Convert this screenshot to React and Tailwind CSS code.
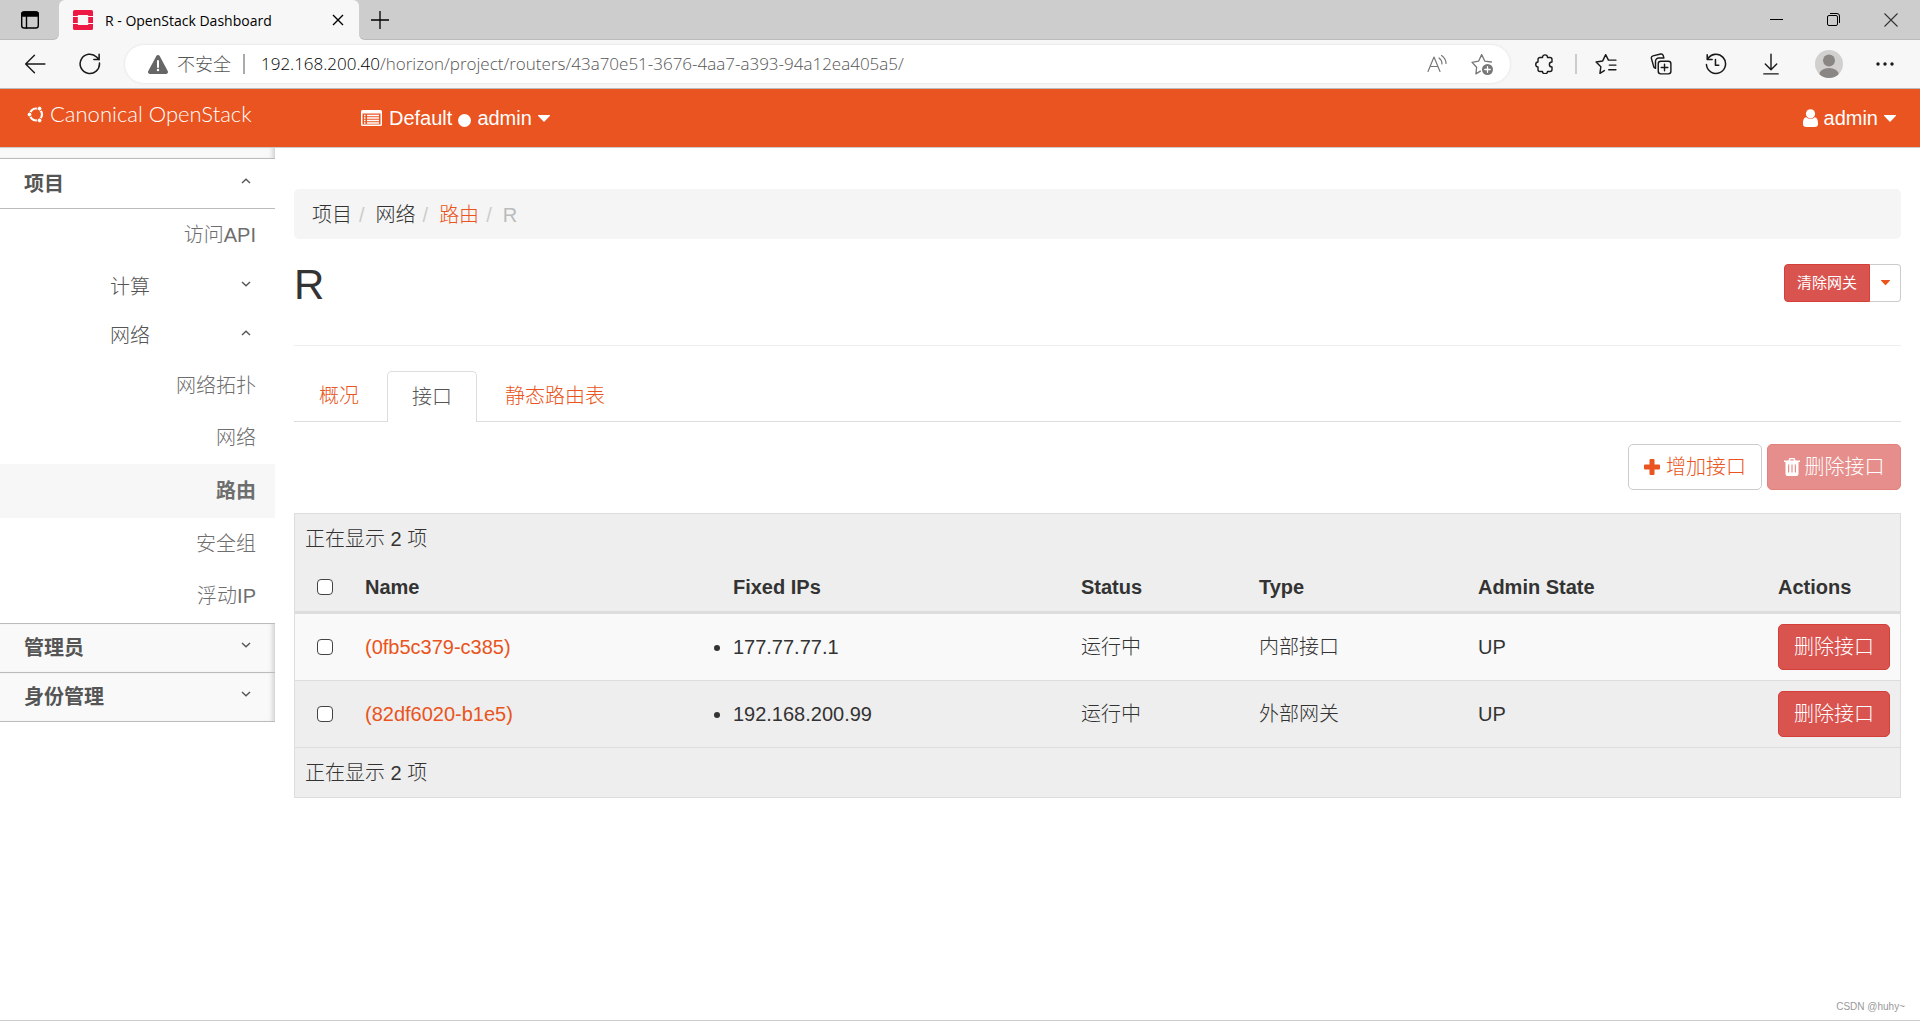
const routes = [
  { id: "(0fb5c379-c385)", ip: "177.77.77.1", status: "运行中", type: "内部接口", state: "UP" },
  { id: "(82df6020-b1e5)", ip: "192.168.200.99", status: "运行中", type: "外部网关", state: "UP" },
];

const networkItems = ["网络拓扑", "网络", "路由", "安全组", "浮动IP"];

function Icon({ size = 20, width = 1.3, className = "", children }) {
  return (
    <svg
      width={size}
      height={size}
      viewBox="0 0 20 20"
      fill="none"
      stroke="currentColor"
      strokeWidth={width}
      strokeLinecap="round"
      strokeLinejoin="round"
      className={`shrink-0 ${className}`}
      aria-hidden="true"
    >
      {children}
    </svg>
  );
}

function Chevron({ up }) {
  return (
    <svg width="10" height="6" viewBox="0 0 10 6" fill="none" stroke="#555" strokeWidth="1.4" aria-hidden="true">
      <path d={up ? "M1 5 5 1.2 9 5" : "M1 1 5 4.8 9 1"} />
    </svg>
  );
}

function Caret({ className }) {
  return (
    <svg viewBox="0 0 12 7" fill="currentColor" className={className} aria-hidden="true">
      <path d="M.6 0h10.800a.5.5 0 0 1 .4.900L6.500 6.600a.7.7 0 0 1-1 0L.2.900A.5.5 0 0 1 .6 0z" />
    </svg>
  );
}

/* Browser window */

function TabStrip() {
  return (
    <div className="flex h-10 bg-[#f7f7f7] text-black">
      <div className="w-[59px] flex items-center pl-5 bg-[#cdcdcd] border-b border-[#bbb] rounded-br-md">
        <button aria-label="标签页">
          <Icon width={1.4}>
            <rect x="1.7" y="2" width="16.6" height="16" rx="2.6" />
            <path d="M1.7 6V4.6A2.6 2.6 0 0 1 4.3 2h11.4a2.6 2.6 0 0 1 2.6 2.6V6z" fill="currentColor" />
            <path d="M6.5 6v12" />
          </Icon>
        </button>
      </div>
      <div className="w-[300px] bg-[#cdcdcd]">
        <div className="h-full flex items-center bg-[#f7f7f7] rounded-t-md pl-[14px] pr-[15px]">
          <svg width="20" height="20" viewBox="0 0 20 20" aria-hidden="true">
            <path
              fill="#ed1944"
              d="M1.6 0h16.8A1.6 1.6 0 0 1 20 1.6V6h-4.8V5H4.8v1H0V1.6A1.6 1.6 0 0 1 1.6 0zM0 7h4.8v6H0zM15.2 7H20v6h-4.8zM0 14h4.8v1h10.4v-1H20v4.4a1.6 1.6 0 0 1-1.6 1.6H1.6A1.6 1.6 0 0 1 0 18.4z"
            />
          </svg>
          <span className="ml-3 text-[14px] whitespace-nowrap">R - OpenStack Dashboard</span>
          <button className="ml-auto" aria-label="关闭标签页">
            <svg width="12" height="12" viewBox="0 0 12 12" stroke="currentColor" strokeWidth="1.4" aria-hidden="true">
              <path d="M1 1l10 10M11 1 1 11" />
            </svg>
          </button>
        </div>
      </div>
      <div className="flex-1 flex items-center bg-[#cdcdcd] border-b border-[#bbb] rounded-bl-md pl-3 pr-[22px]">
        <button aria-label="新建标签页">
          <svg width="18" height="18" viewBox="0 0 18 18" stroke="currentColor" strokeWidth="1.3" aria-hidden="true">
            <path d="M9 0v18M0 9h18" />
          </svg>
        </button>
        <div className="ml-auto flex items-center gap-11">
          <button aria-label="最小化">
            <svg width="13" height="13" viewBox="0 0 13 13" stroke="currentColor" aria-hidden="true">
              <path d="M0 6.5h13" />
            </svg>
          </button>
          <button aria-label="还原">
            <svg width="13" height="13" viewBox="0 0 13 13" fill="none" stroke="currentColor" aria-hidden="true">
              <rect x="0.5" y="2.5" width="10" height="10" rx="1.5" />
              <path d="M3 .5h7A2.5 2.5 0 0 1 12.5 3v7" />
            </svg>
          </button>
          <button aria-label="关闭">
            <svg width="14" height="14" viewBox="0 0 14 14" stroke="#333" strokeWidth="1.1" aria-hidden="true">
              <path d="M.5.5l13 13M13.5.5.5 13.5" />
            </svg>
          </button>
        </div>
      </div>
    </div>
  );
}

function Toolbar() {
  return (
    <div className="flex items-center h-[49px] bg-[#f7f7f7] border-b border-[#bbb] pl-6 pr-[26px] text-[#1a1a1a]">
      <button aria-label="返回">
        <Icon width={1.3} size={22}>
          <path d="M19 10H1.5M9.5 2 1.5 10l8 8" />
        </Icon>
      </button>
      <button className="ml-[33px]" aria-label="刷新">
        <Icon size={22} width={1.4}>
          <path d="M18.6 9.2A8.8 8.8 0 1 1 16 3.6L18.3 6M18.3 1.2V6h-4.8" />
        </Icon>
      </button>
      <div className="ml-6 flex-1 flex items-center h-[38px] bg-white rounded-full shadow-[0_0_3px_#ddd] pl-[22px] pr-[17px]">
        <svg width="22" height="19" viewBox="0 0 22 19" aria-hidden="true">
          <path d="M9.300 1a2 2 0 0 1 3.400 0l8 15a2 2 0 0 1-1.700 3H3a2 2 0 0 1-1.700-3z" fill="#666" />
          <path d="M11 6v6" stroke="#fff" strokeWidth="2" strokeLinecap="round" />
          <circle cx="11" cy="15" r="1.2" fill="#fff" />
        </svg>
        <span className="ml-2 text-[18px] font-light text-[#555]">不安全</span>
        <span className="ml-3 w-0.5 h-5 bg-[#aaa]" />
        <span className="ml-4 text-[17px] font-light text-[#555] whitespace-nowrap">
          <span className="text-black">192.168.200.40</span>
          /horizon/project/routers/43a70e51-3676-4aa7-a393-94a12ea405a5/
        </span>
        <div className="ml-auto flex items-center gap-6 text-[#777]">
          <button aria-label="朗读">
            <Icon size={20} width={1.2}>
              <path d="M1 17.5 7 3l6 14.500M3 12.500h8M12 4q3 2 3 6M14.500 1.500q4.500 3 4.500 8" />
            </Icon>
          </button>
          <button aria-label="收藏">
            <Icon size={22} width={1.2}>
              <path d="M8.500 16.500 4.500 19l.6-6L1 8.500l6-1.200L9.700 1.500l2.800 5.800 6 .9" />
              <circle cx="15" cy="15" r="5" fill="currentColor" stroke="none" />
              <path d="M15 12.500v5M12.500 15h5" stroke="#fff" />
            </Icon>
          </button>
        </div>
      </div>
      <div className="ml-[25px] flex items-center">
        <button aria-label="扩展">
          <Icon size={20} width={1.4}>
            <path d="M5 3.500h2.500c0-3.500 5-3.500 5 0H15a2 2 0 0 1 2 2V8c-3.500 0-3.500 5 0 5v2.500a2 2 0 0 1-2 2h-2.500c0 3-5 3-5 0H5a2 2 0 0 1-2-2V13c-3 0-3-5 0-5V5.500a2 2 0 0 1 2-2z" />
          </Icon>
        </button>
        <span className="ml-5 w-0.5 h-5 bg-[#ccc]" />
        <button className="ml-[18px]" aria-label="收藏夹">
          <Icon size={22} width={1.3}>
            <path d="M8.500 16 4.500 18.500l.8-6L1 8.200l6-1L9.700 1.500l2.500 5H19M13 11h6M12.500 15.200H19" />
          </Icon>
        </button>
        <button className="ml-[33px]" aria-label="集锦">
          <Icon size={22} width={1.3}>
            <rect x="7.500" y="7.500" width="11.500" height="11.500" rx="2.300" />
            <path d="M13.200 10.200v6M10.200 13.200h6M5 14 3.500 12.800 1.300 5A2 2 0 0 1 2.700 2.600l7-1.700A2 2 0 0 1 12 2.200l.6 2.300H8A3 3 0 0 0 5 7.500z" />
          </Icon>
        </button>
        <button className="ml-[33px]" aria-label="历史记录">
          <Icon size={22} width={1.4}>
            <path d="M2 1.500V6h4.500M2.300 5.800A8.700 8.700 0 1 1 1.300 10.500M9.500 6v5.200h3" />
          </Icon>
        </button>
        <button className="ml-[33px]" aria-label="下载">
          <Icon size={22} width={1.3}>
            <path d="M10 1v14M4.800 10 10 15.200l5.200-5.200M3.500 19h13" />
          </Icon>
        </button>
        <button className="ml-[33px]" aria-label="个人资料">
          <svg width="28" height="28" viewBox="0 0 28 28" aria-hidden="true">
            <clipPath id="avatar">
              <circle cx="14" cy="14" r="14" />
            </clipPath>
            <g clipPath="url(#avatar)">
              <rect width="28" height="28" fill="#d2d0ce" />
              <circle cx="14" cy="10.500" r="6" fill="#8a8684" />
              <ellipse cx="14" cy="25" rx="10" ry="7" fill="#8a8684" />
            </g>
          </svg>
        </button>
        <button className="ml-[33px]" aria-label="更多">
          <svg width="18" height="4" viewBox="0 0 18 4" fill="currentColor" aria-hidden="true">
            <circle cx="2" cy="2" r="1.7" />
            <circle cx="9" cy="2" r="1.7" />
            <circle cx="16" cy="2" r="1.7" />
          </svg>
        </button>
      </div>
    </div>
  );
}

/* Dashboard */

function Navbar() {
  return (
    <header className="flex items-center h-[59px] bg-[#e95420] border-b border-[#ccc] text-white pl-[27px] pr-6">
      <a href="#" className="flex items-center w-[334px] pb-2">
        <svg width="17" height="17" viewBox="0 0 17 17" aria-hidden="true">
          <circle cx="9" cy="8.500" r="6" fill="none" stroke="#fff" strokeWidth="2.2" />
          <g fill="#fff" stroke="#e95420" strokeWidth="0.9">
            <circle cx="2.500" cy="8.500" r="2.300" />
            <circle cx="12.600" cy="2.600" r="2.300" />
            <circle cx="12.600" cy="14.400" r="2.300" />
          </g>
        </svg>
        <span className="ml-[6px] font-['Lato'] font-light text-[22px] leading-7">Canonical OpenStack</span>
      </a>
      <button className="flex items-center">
        <svg width="21" height="16" viewBox="0 0 21 16" aria-hidden="true">
          <path
            fill="#fff"
            fillRule="evenodd"
            d="M1.500 0h18A1.500 1.500 0 0 1 21 1.500v13a1.500 1.500 0 0 1-1.500 1.500h-18A1.500 1.500 0 0 1 0 14.500v-13A1.500 1.500 0 0 1 1.500 0zM1.500 3.500v11h18v-11z"
          />
          <path d="M3 5.500h1.500M6 5.500h12M3 8h1.500M6 8h12M3 10.500h1.500M6 10.500h12M3 13h1.500M6 13h12" stroke="#fff" strokeWidth="1.3" />
        </svg>
        <span className="ml-[7px]">Default</span>
        <span className="mx-[6px] mt-1 size-[13px] rounded-full bg-white" />
        <span>admin</span>
        <Caret className="ml-[6px] w-3" />
      </button>
      <button className="ml-auto flex items-center">
        <svg width="15" height="18" viewBox="0 0 15 18" fill="#fff" aria-hidden="true">
          <circle cx="7.500" cy="4.800" r="4.600" />
          <path d="M3.300 8.200a6 6 0 0 0 8.400 0C14.200 8.500 15 11 15 14.500a3.300 3.300 0 0 1-3.300 3.500H3.300A3.300 3.300 0 0 1 0 14.500C0 11 .8 8.500 3.300 8.200z" />
        </svg>
        <span className="ml-[6px]">admin</span>
        <Caret className="ml-[6px] w-3" />
      </button>
    </header>
  );
}

function PanelHeader({ label, open }) {
  return (
    <button
      className={`w-full flex items-center justify-between px-6 font-bold text-[#555] border-b border-[#bbb] ${
        open ? "h-[50px] bg-white" : "h-[49px] bg-[#f9f9f9] shadow-[inset_-5px_0_5px_-3px_#ccc]"
      }`}
    >
      {label}
      <span className="pb-[6px]">
        <Chevron up={open} />
      </span>
    </button>
  );
}

function SubHeader({ label, open }) {
  return (
    <button className="w-full h-[49px] flex items-center justify-between pl-[110px] pr-6 font-light text-[#555]">
      {label}
      <span className="pb-[6px]">
        <Chevron up={open} />
      </span>
    </button>
  );
}

function SideLink({ label, active }) {
  return (
    <a
      href="#"
      className={`flex items-center justify-end pr-[19px] text-[#6e6e6e] ${
        active ? "h-[54px] bg-[#f7f7f7] font-bold" : "h-[52px] font-light"
      }`}
    >
      {label}
    </a>
  );
}

function Sidebar() {
  return (
    <nav className="w-[275px] shrink-0">
      <div className="h-[11px] bg-[#f9f9f9] border-b border-[#bbb] shadow-[inset_-5px_0_5px_-3px_#ccc]" />
      <PanelHeader label="项目" open />
      <SideLink label="访问API" />
      <div className="pt-px">
        <SubHeader label="计算" />
        <SubHeader label="网络" open />
      </div>
      {networkItems.map((item) => (
        <SideLink key={item} label={item} active={item === "路由"} />
      ))}
      <div className="mt-px border-t border-[#bbb]">
        <PanelHeader label="管理员" />
        <PanelHeader label="身份管理" />
      </div>
    </nav>
  );
}

function Check({ label }) {
  return (
    <input
      type="checkbox"
      aria-label={label}
      className="block mx-auto size-4 appearance-none rounded-[4px] border border-[#444] bg-white"
    />
  );
}

function InterfaceTable() {
  return (
    <table className="mt-[23px] w-full table-fixed border border-[#ddd] border-separate border-spacing-0 bg-[#eee] text-left">
      <colgroup>
        <col className="w-[60px]" />
        <col />
        <col className="w-[348px]" />
        <col className="w-[178px]" />
        <col className="w-[219px]" />
        <col className="w-[300px]" />
        <col className="w-[132px]" />
      </colgroup>
      <thead>
        <tr>
          <td colSpan={7} className="h-[49px] px-[10px] font-light">正在显示 2 项</td>
        </tr>
        <tr className="[&>th]:h-[51px] [&>th]:px-[10px] [&>th]:border-b-3 [&>th]:border-[#ddd]">
          <th><Check label="全选" /></th>
          <th>Name</th>
          <th>Fixed IPs</th>
          <th>Status</th>
          <th>Type</th>
          <th>Admin State</th>
          <th>Actions</th>
        </tr>
      </thead>
      <tbody className="font-light">
        {routes.map((r) => (
          <tr
            key={r.id}
            className="odd:bg-[#f9f9f9] [&>td]:h-[67px] [&>td]:px-[10px] [&>td]:border-b [&>td]:border-[#ddd]"
          >
            <td><Check label={r.id} /></td>
            <td><a href="#" className="text-[#e95420]">{r.id}</a></td>
            <td>
              <ul className="list-disc">
                <li>{r.ip}</li>
              </ul>
            </td>
            <td>{r.status}</td>
            <td>{r.type}</td>
            <td>{r.state}</td>
            <td>
              <button className="block h-[46px] w-full rounded-[5px] border border-[#d43f3a] bg-[#d9534f] text-white">
                删除接口
              </button>
            </td>
          </tr>
        ))}
      </tbody>
      <tfoot>
        <tr>
          <td colSpan={7} className="h-[49px] px-[10px] font-light">正在显示 2 项</td>
        </tr>
      </tfoot>
    </table>
  );
}

function RouterPage() {
  return (
    <main className="flex-1 px-[19px] pt-[41px]">
      <ol className="flex items-center h-[50px] px-[18px] pt-0.5 rounded-[5px] bg-[#f5f5f5] font-light">
        <li>项目</li>
        <li className="px-[7px] text-[#ccc]">/</li>
        <li className="ml-1">网络</li>
        <li className="px-[7px] text-[#ccc]">/</li>
        <li className="ml-1"><a href="#" className="text-[#e95420]">路由</a></li>
        <li className="px-[7px] text-[#ccc]">/</li>
        <li className="ml-1 text-[#bbb]">R</li>
      </ol>

      <div className="flex items-start justify-between h-[107px] pt-[25px] border-b border-[#eee]">
        <h1 className="text-[42px] leading-[42px]">R</h1>
        <div className="flex h-[38px]">
          <button className="w-[86px] rounded-l-[4px] border border-[#d43f3a] bg-[#d9534f] text-[15px] text-white">
            清除网关
          </button>
          <button
            aria-label="更多操作"
            className="w-[31px] flex items-center justify-center rounded-r-[4px] border border-l-0 border-[#ccc] text-[#e95420]"
          >
            <Caret className="w-[9px]" />
          </button>
        </div>
      </div>

      <div className="mt-[25px] flex h-[51px] border-b border-[#ddd] font-light text-[#e95420]" role="tablist">
        <button role="tab" className="px-[25px] mr-[3px]">概况</button>
        <button
          role="tab"
          aria-selected="true"
          className="h-[51px] px-6 mr-[3px] rounded-t-[5px] border border-b-0 border-[#ddd] bg-white text-[#555]"
        >
          接口
        </button>
        <button role="tab" className="px-[25px]">静态路由表</button>
      </div>

      <div className="mt-[22px] flex justify-end gap-[5px] font-light">
        <button className="flex items-center justify-center w-[134px] h-[46px] rounded-[5px] border border-[#ccc] text-[#e95420]">
          <svg width="16" height="16" viewBox="0 0 16 16" className="mr-[6px]" fill="currentColor" aria-hidden="true">
            <path d="M6.500 0h3a1 1 0 0 1 1 1v4.500H15a1 1 0 0 1 1 1v3a1 1 0 0 1-1 1h-4.500V15a1 1 0 0 1-1 1h-3a1 1 0 0 1-1-1v-4.500H1a1 1 0 0 1-1-1v-3a1 1 0 0 1 1-1h4.500V1a1 1 0 0 1 1-1z" />
          </svg>
          增加接口
        </button>
        <button
          disabled
          className="flex items-center justify-center w-[134px] h-[46px] rounded-[5px] border border-[#d43f3a] bg-[#d9534f] text-white opacity-65"
        >
          <svg width="16" height="18" viewBox="0 0 16 18" className="mr-[5px]" aria-hidden="true">
            <path
              fill="#fff"
              fillRule="evenodd"
              d="M5.500 0h5l1.200 2.500H16V4h-1.500v12a2 2 0 0 1-2 2h-9a2 2 0 0 1-2-2V4H0V2.500h4.300zM6 2.500h4l-.5-1.200h-3zM4 6.500v8h1.200v-8zM7.400 6.500v8h1.200v-8zM10.800 6.500v8H12v-8z"
            />
          </svg>
          删除接口
        </button>
      </div>

      <InterfaceTable />
    </main>
  );
}

export default function App() {
  return (
    <div className="relative min-h-screen flex flex-col bg-white border-b border-[#ccc]">
      <div className="font-['Open_Sans','Noto_Sans_CJK_SC',sans-serif]">
        <TabStrip />
        <Toolbar />
      </div>
      <div className="flex-1 flex flex-col font-['Liberation_Sans','Noto_Sans_CJK_SC',sans-serif] text-[20px] leading-7 text-[#333]">
        <Navbar />
        <div className="flex-1 flex items-start">
          <Sidebar />
          <RouterPage />
        </div>
      </div>
      <span className="absolute right-[15px] bottom-[6px] font-['Liberation_Sans',sans-serif] text-[10px] text-[#999]">
        CSDN @huhy~
      </span>
    </div>
  );
}
